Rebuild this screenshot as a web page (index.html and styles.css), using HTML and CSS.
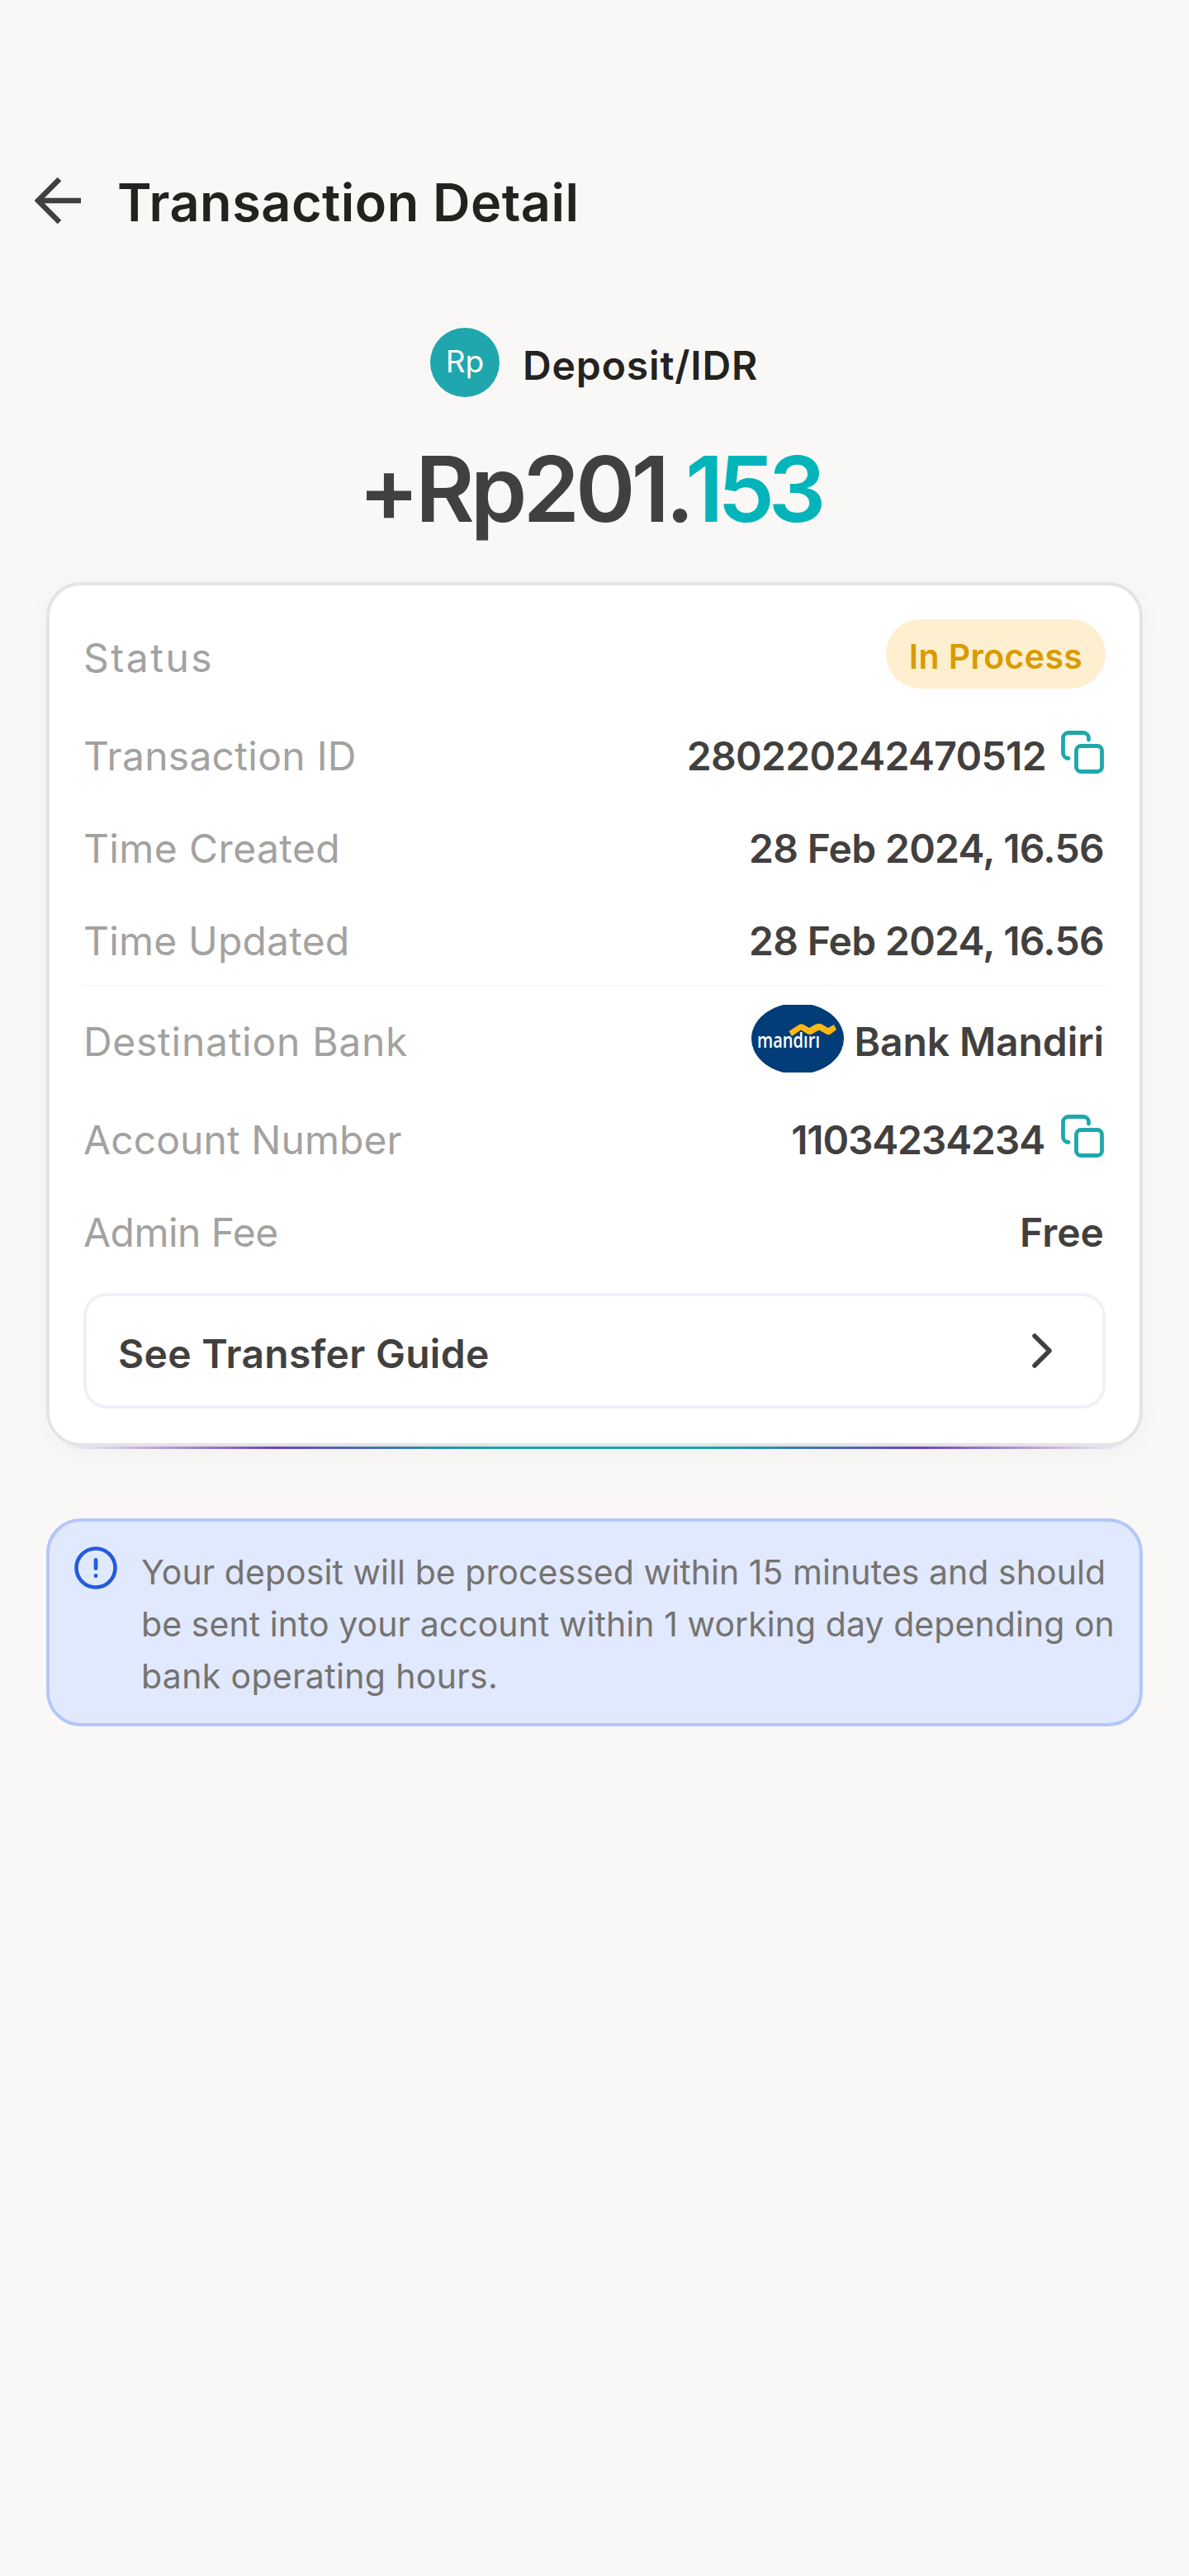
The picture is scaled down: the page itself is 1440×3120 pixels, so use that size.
FILE: index.html
```html
<!DOCTYPE html>
<html lang="en">
<head>
<meta charset="utf-8">
<title>Transaction Detail</title>
<link rel="stylesheet" href="styles.css">
</head>
<body>
<header class="topbar">
  <svg class="back" viewBox="0 0 56 56"><path d="M30 2 4 28 30 54M4 28H56" fill="none" stroke="#42403e" stroke-width="6.5"/></svg>
  <h1 class="title">Transaction Detail</h1>
</header>
<main>
  <section class="summary">
    <div class="kind"><span class="coin">Rp</span><span class="kind-name">Deposit/IDR</span></div>
    <div class="amount">+Rp201.<span class="cents">153</span></div>
  </section>
  <section class="card-edge">
    <div class="card">
      <div class="row row-status"><span class="label">Status</span><span class="pill">In Process</span></div>
      <div class="row row-id"><span class="label">Transaction ID</span><span class="value">280220242470512
        <svg class="copy" viewBox="0 0 52 52"><path d="M33.5 11V9a6.500 6.500 0 0 0-6.500-6.500H9A6.500 6.500 0 0 0 2.500 9v18a6.500 6.500 0 0 0 6.500 6.500"/><rect x="18.500" y="18.500" width="31" height="31" rx="5.500"/></svg></span></div>
      <div class="row row-created"><span class="label">Time Created</span><span class="value">28 Feb 2024, 16.56</span></div>
      <div class="row row-updated"><span class="label">Time Updated</span><span class="value">28 Feb 2024, 16.56</span></div>
      <div class="row row-bank"><span class="label">Destination Bank</span><span class="value">
        <svg class="bank" viewBox="0 0 112 82"><ellipse cx="56" cy="41" rx="56" ry="43" fill="#023c79"/><text x="7" y="52" textLength="76" lengthAdjust="spacingAndGlyphs" class="bank-text">mandırı</text><path d="M45.500 32 57 24.500Q61 22 65 25L70 28 77 24Q82 21.500 86 24L93 28 100 24 103 30 96 35.500Q93 37.500 89 34.500L82 30.500 74 35Q70 37.500 66 34L60 30.500 49 38Z" fill="#fdb813"/></svg>Bank Mandiri</span></div>
      <div class="row row-account"><span class="label">Account Number</span><span class="value">11034234234
        <svg class="copy" viewBox="0 0 52 52"><path d="M33.5 11V9a6.500 6.500 0 0 0-6.500-6.500H9A6.500 6.500 0 0 0 2.500 9v18a6.500 6.500 0 0 0 6.500 6.500"/><rect x="18.500" y="18.500" width="31" height="31" rx="5.500"/></svg></span></div>
      <div class="row row-fee"><span class="label">Admin Fee</span><span class="value">Free</span></div>
      <a class="guide">See Transfer Guide<svg class="chevron" viewBox="0 0 24 42"><path d="M3 3 21 21 3 39" fill="none" stroke="#42403e" stroke-width="5.500" stroke-linecap="round" stroke-linejoin="round"/></svg></a>
    </div>
  </section>
  <aside class="notice">
    <svg class="info" viewBox="0 0 52 52"><circle cx="26" cy="26" r="23.500" fill="none" stroke="#245bdb" stroke-width="4.600"/><path d="M26 16.500V26.500M26 35.500v.2" stroke="#245bdb" stroke-width="4.800" stroke-linecap="round"/></svg>
    <p class="notice-text">Your deposit will be processed within 15 minutes and should<br>be sent into your account within 1 working day depending on<br><span class="notice-end">bank operating hours.</span></p>
  </aside>
</main>
</body>
</html>
```
FILE: styles.css
```css
* { box-sizing: border-box; }
body { margin: 0; min-height: 3120px; padding-top: 185px; background: #f9f8f6; color: #42403e; font-family: Inter, "Liberation Sans", sans-serif; }
svg { display: block; flex: none; }

.topbar { display: flex; align-items: center; height: 120px; padding-left: 42px; }
.back { width: 56px; height: 56px; margin-bottom: 5px; }
.title { margin: 0 0 0 44px; font-size: 63px; line-height: 80px; font-weight: 600; letter-spacing: .49px; color: #24221f; white-space: nowrap; }

.summary { height: 400px; padding-top: 92px; }
.kind { display: flex; align-items: center; height: 84px; padding-left: 521px; }
.coin { display: flex; align-items: center; justify-content: center; width: 84px; height: 84px; padding-bottom: 4px; border-radius: 50%; background: #1fa7ad; color: #fff; font-size: 37px; }
.kind-name { margin: 7px 0 0 28px; font-size: 48px; font-weight: 600; letter-spacing: .88px; color: #24221f; }
.amount { padding: 44px 0 0 434px; font-size: 110px; line-height: 134px; font-weight: 600; letter-spacing: -5px; white-space: nowrap; }
.cents { margin-left: -6px; color: #03b5ba; letter-spacing: -7.6px; }

/* The gradient shows as a thin strip under the card's bottom edge. */
.card-edge { margin: 0 56px; padding-bottom: 3px; border-radius: 42px; background: linear-gradient(90deg, #6d47b500 1%, #6d47b5 20.500%, #1aa6ab 41%, #1aa6ab 60%, #6d47b5 80%, #6d47b500 99%) bottom / 100% 50px no-repeat; box-shadow: 0 4px 28px rgba(40, 30, 20, .035); }
.card { height: 1047px; padding: 24px 41px 0; border: 4px solid #e4e4e4; border-radius: 42px; background: #fff; }

.row { display: flex; align-items: center; justify-content: space-between; height: 112px; font-size: 48px; white-space: nowrap; }
.label { color: #a3a2a0; }
.value { display: flex; align-items: center; padding-right: 2px; font-weight: 600; }
.row-status { height: 126px; }
.row-status .label { letter-spacing: 2.5px; }
.row-id .label { letter-spacing: .28px; }
.row-id .value { letter-spacing: -.65px; }
.row-created .label { letter-spacing: .38px; }
.row-created .value, .row-updated .value { letter-spacing: -.7px; }
.row-updated { height: 111px; padding-top: 2px; border-bottom: 1px solid #f3f3f2; }
.row-updated .label { letter-spacing: .18px; }
.row-bank { height: 134px; }
.row-bank .label { letter-spacing: .72px; }
.row-bank .value { letter-spacing: -.11px; }
.row-account { height: 104px; }
.row-account .label { letter-spacing: .07px; }
.row-account .value { letter-spacing: -1.16px; }
.row-account .copy { margin-left: 20px; }
.row-fee { height: 120px; }
.row-fee .label { letter-spacing: -.53px; }

.pill { display: flex; align-items: center; justify-content: center; width: 266px; height: 84px; margin-bottom: 8px; padding-top: 6px; border-radius: 42px; background: #feefd0; color: #d99b00; font-size: 41px; font-weight: 600; letter-spacing: .37px; }
.copy { width: 52px; height: 52px; margin: 0 0 8px 18px; fill: none; stroke: #1fa7ad; stroke-width: 4.8; stroke-linecap: round; }
.bank { width: 112px; height: 82px; margin: 0 13px 7px 0; overflow: hidden; }
.bank-text { font: 600 25px "Open Sans", sans-serif; letter-spacing: 0; fill: #fff; }
.guide { display: flex; align-items: center; justify-content: space-between; height: 140px; margin-top: 14px; padding: 6px 61px 0 38px; border: 4px solid #eef1f7; border-radius: 28px; font-size: 48px; font-weight: 600; letter-spacing: .3px; }
.chevron { width: 24px; height: 42px; margin-bottom: 7px; }

.notice { display: flex; height: 252px; margin: 84px 56px 0; padding: 30px 0 0 30px; border: 4px solid #b3c7f7; border-radius: 42px; background: #e1e9fe; }
.info { width: 52px; height: 52px; }
.notice-text { margin: 0 0 0 29px; color: #757370; font-size: 41px; line-height: 63px; letter-spacing: .06px; white-space: nowrap; }
.notice-end { letter-spacing: .34px; }
```
